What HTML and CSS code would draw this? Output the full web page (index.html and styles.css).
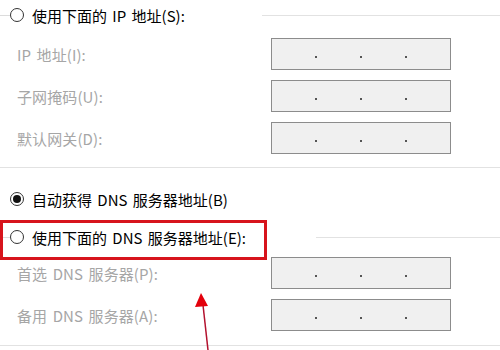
FILE: index.html
```html
<!DOCTYPE html>
<html lang="zh-CN">
    <head>
        <meta charset="utf-8" />
        <title>IP 设置</title>
        <link rel="stylesheet" href="styles.css">
    </head>
    <body>
        <main class="ventana">
            <!-- IP -->
            <div class="cabecera cabecera--ip">
                <span class="tramo"></span>
                <span class="radio"></span>
                <span class="cabecera_texto">使用下面的 IP 地址(S):</span>
                <span class="regla regla--ip"></span>
            </div>

            <div class="campos campos--ip">
                <div class="campo">
                    <span class="campo_etiqueta">IP 地址(I):</span>
                    <span class="caja"><i></i><i></i><i></i></span>
                </div>
                <div class="campo">
                    <span class="campo_etiqueta">子网掩码(U):</span>
                    <span class="caja"><i></i><i></i><i></i></span>
                </div>
                <div class="campo">
                    <span class="campo_etiqueta">默认网关(D):</span>
                    <span class="caja"><i></i><i></i><i></i></span>
                </div>
            </div>

            <div class="separador"></div>

            <!-- DNS -->
            <div class="cabecera cabecera--auto">
                <span class="radio radio--marcado"></span>
                <span class="cabecera_texto">自动获得 DNS 服务器地址(B)</span>
            </div>

            <div class="cabecera cabecera--dns">
                <span class="tramo"></span>
                <span class="radio"></span>
                <span class="cabecera_texto">使用下面的 DNS 服务器地址(E):</span>
                <span class="regla regla--dns"></span>
            </div>

            <div class="campos campos--dns">
                <div class="campo">
                    <span class="campo_etiqueta">首选 DNS 服务器(P):</span>
                    <span class="caja"><i></i><i></i><i></i></span>
                </div>
                <div class="campo">
                    <span class="campo_etiqueta">备用 DNS 服务器(A):</span>
                    <span class="caja"><i></i><i></i><i></i></span>
                </div>
            </div>

            <div class="separador separador--final"></div>

            <!-- anotaciones -->
            <div class="marco-rojo"></div>
            <svg class="flecha" width="30" height="60" viewBox="190 290 30 60">
                <line x1="203" y1="305" x2="208" y2="350" stroke="#b3112e" stroke-width="1.5" />
                <polygon points="201,293 195,307 208,306" fill="#e3000b" />
            </svg>
        </main>
    </body>
</html>
```

FILE: styles.css
```css
* {
    padding: 0;
    margin: 0;
    box-sizing: border-box;
}

body {
    font-family: "Noto Sans CJK SC", "Noto Sans", sans-serif;
    background-color: #fff;
    color: #000;
}

.ventana {
    position: relative;
    width: 500px;
    height: 350px;
    overflow: hidden;
}

.cabecera {
    display: flex;
    align-items: center;
    height: 30px;
    font-size: 15px;
    word-spacing: 2px;
}

.cabecera--auto {
    margin-top: 16px;
    padding-left: 10px;
}

.cabecera--dns {
    margin-top: 8px;
}

.tramo {
    width: 10px;
    height: 1px;
    background-color: #dcdcdc;
}

.radio {
    width: 14px;
    height: 14px;
    border: 1px solid #333;
    border-radius: 50%;
    background-color: #fff;
    margin-right: 8px;
    display: flex;
    justify-content: center;
    align-items: center;
}

.radio--marcado::after {
    content: "";
    width: 8px;
    height: 8px;
    border-radius: 50%;
    background-color: #111;
}

.regla {
    flex: 1;
    height: 1px;
    background-color: #e2e2e2;
}

.regla--ip {
    margin-left: 77px;
}

.regla--dns {
    margin-left: 70px;
}

.campos {
    display: flex;
    flex-direction: column;
    gap: 10px;
}

.campos--ip {
    margin-top: 8px;
}

.campos--dns {
    margin-top: 5px;
}

.campo {
    display: flex;
    align-items: center;
    height: 32px;
}

.campo_etiqueta {
    width: 271px;
    padding-left: 17px;
    font-size: 15px;
    letter-spacing: .1px;
    word-spacing: 2px;
    color: #a6a6a6;
}

.caja {
    display: flex;
    justify-content: space-evenly;
    align-items: center;
    width: 180px;
    height: 32px;
    padding-top: 5px;
    background-color: #f0f0f0;
    border: 1px solid #8c8c8c;
}

.caja i {
    width: 2px;
    height: 2px;
    background-color: #555;
}

.separador {
    height: 1px;
    margin-top: 13px;
    background-color: #e2e2e2;
}

.separador--final {
    margin-top: 14px;
}

.marco-rojo {
    position: absolute;
    left: 0;
    top: 220px;
    width: 267px;
    height: 40px;
    border: 3px solid #d7141c;
}

.flecha {
    position: absolute;
    left: 190px;
    top: 290px;
}
```
